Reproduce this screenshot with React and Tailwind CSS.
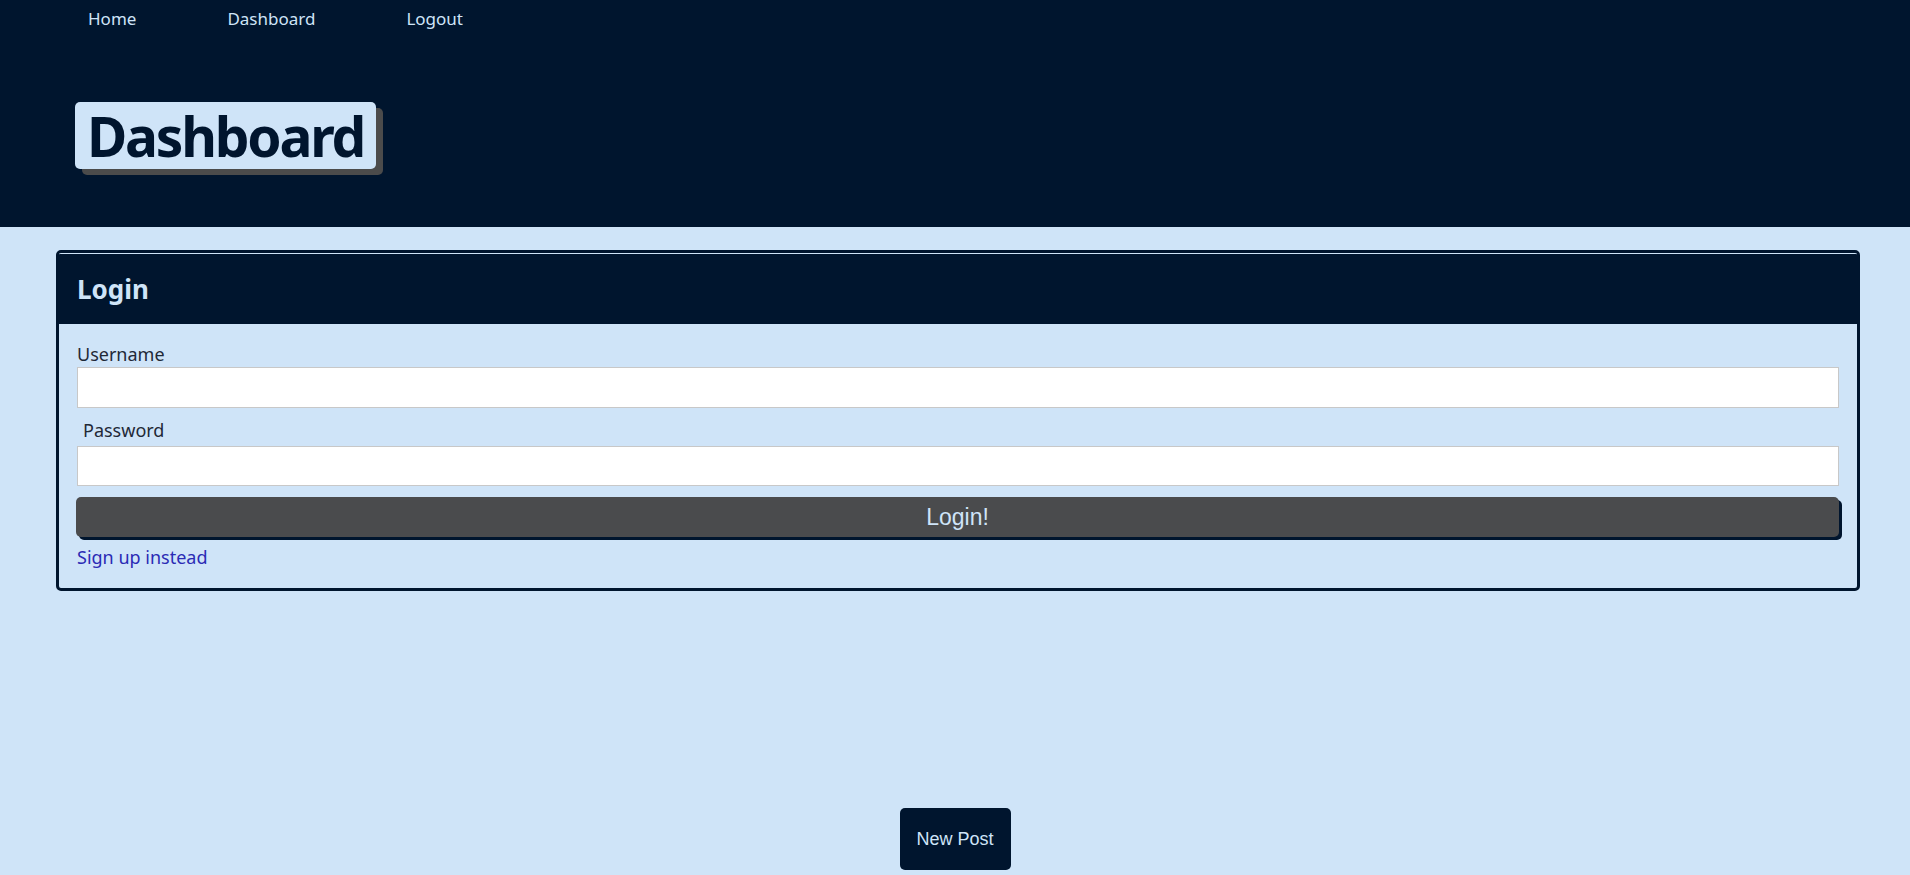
import React from "react";

const plex = { fontFamily: '"Noto Sans", "Open Sans", sans-serif' };

export default function App() {
  return (
    <div className="min-h-screen w-full bg-[#cfe4f8] flex flex-col" style={plex}>
      {/* Header */}
      <header className="bg-[#00152e] h-[227px] flex flex-col">
        <nav className="flex items-center h-[36px] pl-[88px] gap-[91px] text-[17px] text-[#cfe4f8]">
          <a href="#" className="leading-none">Home</a>
          <a href="#" className="leading-none">Dashboard</a>
          <a href="#" className="leading-none">Logout</a>
        </nav>
        <div className="pl-[75px] pt-[66px]">
          <h1 className="inline-block bg-[#cfe4f8] text-[#00152e] font-bold text-[55px] leading-[67px] px-[12px] rounded-[5px] shadow-[7px_6px_0_#4b4b4b] tracking-[-0.04em]">
            Dashboard
          </h1>
        </div>
      </header>

      {/* Login card */}
      <main className="pl-[56px] pr-[50px] pt-[23px]">
        <div className="border-[3px] border-[#00152e] rounded-[5px] overflow-hidden">
          <div className="border-t border-[#cfe4f8] bg-[#00152e] h-[71px] flex items-center px-[18px]">
            <h2 className="text-[26px] font-bold text-[#cfe4f8]">Login</h2>
          </div>
          <form className="px-[18px] pt-[19px] pb-[20px] flex flex-col">
            <label className="text-[18px] leading-[22px] text-[#1f2937]">Username</label>
            <input className="h-[41px] bg-white border border-[#c8c8c8] mt-[2px] w-full" />
            <label className="text-[18px] leading-[22px] text-[#1f2937] mt-[11px] pl-[6px]">Password</label>
            <input type="password" className="h-[40px] bg-white border border-[#c8c8c8] mt-[5px] w-full" />
            <button
              type="button"
              className="mt-[11px] h-[40px] bg-[#4a4b4d] text-[#cfe4f8] text-[23px] rounded-[5px] shadow-[3px_3px_0_#00152e] -ml-[1px]"
              style={{ fontFamily: '"Liberation Sans", Arial, sans-serif' }}
            >
              Login!
            </button>
            <a href="#" className="mt-[9px] text-[18px] leading-[22px] text-[#2b2bb5] self-start">
              Sign up instead
            </a>
          </form>
        </div>
      </main>

      <div className="flex justify-center mt-[217px]">
        <button
          className="w-[111px] h-[62px] bg-[#00152e] text-[#cfe4f8] text-[18px] rounded-[5px]"
          style={{ fontFamily: '"Liberation Sans", Arial, sans-serif' }}
        >
          New Post
        </button>
      </div>
    </div>
  );
}
